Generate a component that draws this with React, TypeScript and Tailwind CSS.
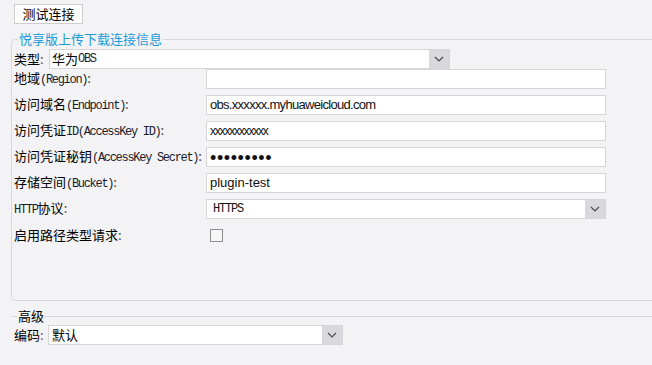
import React from "react";

const CJK = "font-['Noto_Sans_CJK_SC',sans-serif]";

function M({ children }: { children: React.ReactNode }) {
  return (
    <span className="font-['Liberation_Mono',monospace] text-[12px] tracking-[-1.3px] text-[#1a1a2a]">
      {children}
    </span>
  );
}

function Chevron() {
  return (
    <svg width="10" height="6" viewBox="0 0 10 6">
      <polyline points="1,1 5,5 9,1" fill="none" stroke="#4a4a4a" strokeWidth="1.2" />
    </svg>
  );
}

function Select({ w, children }: { w: string; children: React.ReactNode }) {
  return (
    <div className={`flex h-[20px] ${w} border border-[#d6d6d6] bg-white`}>
      <div className="flex flex-1 items-center overflow-hidden pl-[2px] leading-[18px]">{children}</div>
      <div className="flex w-[20px] items-center justify-center bg-[#d9d9dd]">
        <Chevron />
      </div>
    </div>
  );
}

function Input({ children }: { children?: React.ReactNode }) {
  return (
    <div className="flex h-[20px] w-[400px] items-center border border-[#d6d6d6] bg-white pl-[3px] font-['Liberation_Sans',sans-serif] text-[13px] text-[#111]">
      {children}
    </div>
  );
}

function Row({ label, children, first }: { label: React.ReactNode; children: React.ReactNode; first?: boolean }) {
  return (
    <div className={`flex h-[20px] items-center ${first ? "" : "mt-[6px]"}`}>
      <div className="w-[192px] whitespace-nowrap leading-[20px]">{label}</div>
      {children}
    </div>
  );
}

const Colon = () => <span className="text-[#444]">:</span>;

export default function App() {
  return (
    <div className={`relative h-[365px] w-[652px] overflow-hidden bg-[#f3f3f5] text-[13px] text-black ${CJK}`}>
      <div className="pl-[14px] pt-[4px]">
        <button className="flex h-[20px] w-[69px] items-center justify-center border border-[#cdcdcd] bg-white text-[13px] leading-[18px]">
          测试连接
        </button>
      </div>

      <fieldset className="ml-[11px] mt-[6px] w-[700px] rounded-[4px] border border-[#dadada] pb-[55px] pl-[2px]">
        <legend className="ml-[4px] px-[1px] text-[13px] leading-[18px] text-[#1b9bd8]">悦享版上传下载连接信息</legend>

        <div className="mt-[1px] flex h-[20px] items-center">
          <div className="w-[35px] whitespace-nowrap leading-[20px]">
            类型<span className="text-[#8a3a62]">:</span>
          </div>
          <Select w="w-[401px]">
            <span>华为</span>
            <M>OBS</M>
          </Select>
        </div>

        <Row first label={<>地域<M>(Region)</M><Colon /></>}>
          <Input />
        </Row>
        <Row label={<>访问域名<M>(Endpoint)</M><Colon /></>}>
          <Input>
            <span className="tracking-[-0.7px]">obs.xxxxxx.myhuaweicloud.com</span>
          </Input>
        </Row>
        <Row label={<>访问凭证<M>ID(AccessKey ID)</M><Colon /></>}>
          <Input>
            <span className="text-[12px] tracking-[-1.2px]">xxxxxxxxxxxx</span>
          </Input>
        </Row>
        <Row label={<>访问凭证秘钥<M>(AccessKey Secret)</M><Colon /></>}>
          <Input>
            <span className="mt-[1px] text-[18px] leading-[18px] tracking-[0.6px]">•••••••••</span>
          </Input>
        </Row>
        <Row label={<>存储空间<M>(Bucket)</M><Colon /></>}>
          <Input>
            <span>plugin-test</span>
          </Input>
        </Row>
        <Row label={<><M>HTTP</M>协议<Colon /></>}>
          <Select w="w-[400px]">
            <span className="pl-[4px] font-['Liberation_Mono',monospace] text-[12px] tracking-[-1.2px] text-[#111]">HTTPS</span>
          </Select>
        </Row>
        <Row label={<>启用路径类型请求<Colon /></>}>
          <div className="ml-[4px] h-[13px] w-[13px] border border-[#8e8e8e] bg-[#f6f6f7]" />
        </Row>
      </fieldset>

      <fieldset className="ml-[11px] mt-[6px] w-[700px] border-0 border-t border-[#dadada] pl-[3px]">
        <legend className="ml-[4px] text-[13px] leading-[18px]">高级</legend>
        <div className="flex h-[20px] items-center">
          <div className="w-[34px] whitespace-nowrap leading-[20px]">
            编码<span className="text-[#8a3a62]">:</span>
          </div>
          <Select w="w-[295px]">
            <span className="pl-[1px]">默认</span>
          </Select>
        </div>
      </fieldset>
    </div>
  );
}
